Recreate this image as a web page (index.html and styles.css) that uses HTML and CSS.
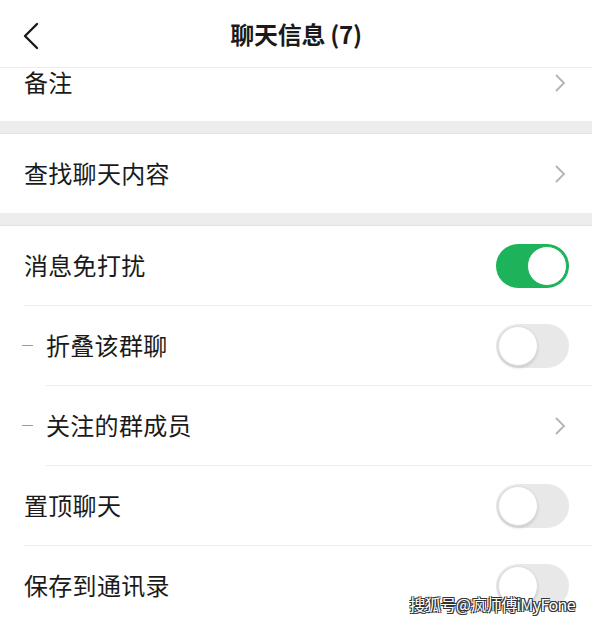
FILE: index.html
```html
<!DOCTYPE html>
<html lang="zh-CN">
<head>
  <meta charset="UTF-8">
  <meta name="viewport" content="width=device-width, initial-scale=1.0">
  <title>聊天信息</title>
  <link rel="stylesheet" href="styles.css">
</head>
<body>

<div class="page">
  <header class="topbar">
    <svg class="back" width="18" height="28" viewBox="0 0 18 28">
      <path d="M15 2 L3 14 L15 26" fill="none" stroke="#1a1a1a" stroke-width="2.4" stroke-linecap="round" stroke-linejoin="round"/>
    </svg>
    <h1 class="title">聊天信息 (7)</h1>
  </header>

  <div class="group">
    <div class="row row-cut">
      <span class="label">备注</span>
      <svg class="chev" width="12" height="20" viewBox="0 0 12 20"><path d="M2 2 L10 10 L2 18" fill="none" stroke="#b3b3b3" stroke-width="1.8"/></svg>
    </div>
  </div>

  <div class="gap"></div>

  <div class="group">
    <div class="row last">
      <span class="label">查找聊天内容</span>
      <svg class="chev" width="12" height="20" viewBox="0 0 12 20"><path d="M2 2 L10 10 L2 18" fill="none" stroke="#b3b3b3" stroke-width="1.8"/></svg>
    </div>
  </div>

  <div class="gap"></div>

  <div class="group">
    <div class="row">
      <span class="label">消息免打扰</span>
      <span class="switch on"><span class="knob"></span></span>
    </div>
    <div class="row sub">
      <span class="dash"></span>
      <span class="label">折叠该群聊</span>
      <span class="switch"><span class="knob"></span></span>
    </div>
    <div class="row sub">
      <span class="dash"></span>
      <span class="label">关注的群成员</span>
      <svg class="chev" width="12" height="20" viewBox="0 0 12 20"><path d="M2 2 L10 10 L2 18" fill="none" stroke="#b3b3b3" stroke-width="1.8"/></svg>
    </div>
    <div class="row">
      <span class="label">置顶聊天</span>
      <span class="switch"><span class="knob"></span></span>
    </div>
    <div class="row last">
      <span class="label">保存到通讯录</span>
      <span class="switch"><span class="knob"></span></span>
    </div>
  </div>

  <div class="watermark">搜狐号@疯师傅iMyFone</div>
</div>

</body>
</html>
```

FILE: styles.css
```css
body {
  margin: 0;
  background: #ffffff;
  font-family: "Noto Sans CJK SC", "Noto Sans", sans-serif;
  color: #1a1a1a;
}

.page {
  position: relative;
  width: 592px;
  height: 624px;
  overflow: hidden;
}

.topbar {
  height: 67px;
  display: flex;
  align-items: center;
  justify-content: center;
  position: relative;
  border-bottom: 1px solid #ececec;
}

.back {
  position: absolute;
  left: 22px;
  top: 22px;
}

.title {
  margin: 0;
  font-size: 24px;
  font-weight: 700;
  letter-spacing: -0.3px;
}

.group {
  background: #ffffff;
}

.gap {
  height: 12px;
  background: #ededed;
  border-bottom: 1px solid #e3e3e3;
}

.row {
  height: 79px;
  display: flex;
  align-items: center;
  margin-left: 24px;
  padding-right: 22px;
  border-bottom: 1px solid #ececec;
}

.row.last {
  border-bottom: none;
}

.row.row-cut {
  height: 30px;
  padding-bottom: 23px;
  border-bottom: none;
}

.row.sub {
  margin-left: 46px;
}

.label {
  flex: 1;
  font-size: 24px;
  letter-spacing: 0.3px;
  padding-bottom: 3px;
}

.dash {
  width: 11px;
  height: 1px;
  background: #9a9a9a;
  margin-left: -24px;
  margin-right: 13px;
}

.chev {
  margin-right: 4px;
}

.switch {
  position: relative;
  width: 73px;
  height: 44px;
  border-radius: 22px;
  background: #e8e8e8;
  margin-right: 1px;
}

.switch .knob {
  position: absolute;
  top: 2px;
  left: 2px;
  width: 38px;
  height: 38px;
  border-radius: 50%;
  background: #ffffff;
  border: 1px solid #dcdcdc;
  box-shadow: 0 2px 3px rgba(0, 0, 0, 0.12);
}

.switch.on {
  background: #1db35a;
}

.switch.on .knob {
  left: auto;
  right: 2px;
  border-color: #1db35a;
  box-shadow: none;
}

.watermark {
  position: absolute;
  right: 17px;
  bottom: 8px;
  font-size: 16px;
  color: #ffffff;
  letter-spacing: -0.6px;
  text-shadow: -1px -1px 0 #333, 1px -1px 0 #333, -1px 1px 0 #333, 1px 1px 0 #333;
}
```
